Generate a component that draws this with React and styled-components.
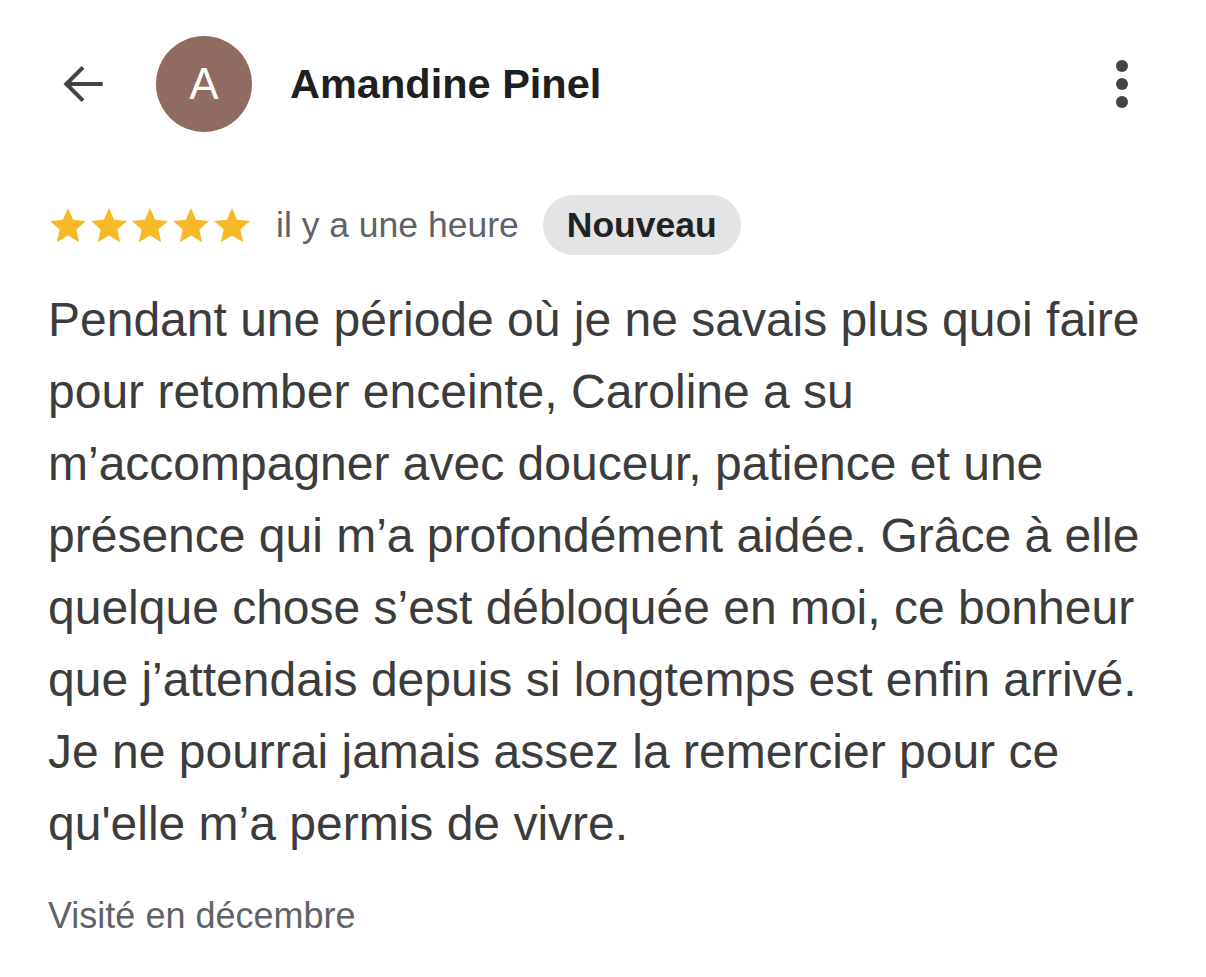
import React from "react";
import styled, { createGlobalStyle } from "styled-components";

const Global = createGlobalStyle`
  html, body { margin: 0; padding: 0; background: #fff; }
  body { font-family: "Liberation Sans", Arial, sans-serif; }
`;

const Page = styled.div`
  width: 1206px;
  min-height: 977px;
  background: #fff;
  box-sizing: border-box;
  padding: 36px 60px 0 48px;
`;

const Header = styled.div`
  display: flex;
  align-items: center;
  height: 96px;
`;

const BackButton = styled.button`
  border: 0;
  background: none;
  padding: 0;
  margin-left: 10px;
  width: 52px;
  height: 52px;
  display: flex;
  align-items: center;
  justify-content: center;
  color: #444;
`;

const Avatar = styled.div`
  width: 96px;
  height: 96px;
  border-radius: 50%;
  background: #8f6b61;
  color: #fff;
  display: flex;
  align-items: center;
  justify-content: center;
  font-size: 44px;
  margin-left: 46px;
`;

const Name = styled.div`
  font-weight: 700;
  font-size: 41.5px;
  color: #1f1f1f;
  margin-left: 38px;
  flex: 1;
`;

const MoreButton = styled.div`
  display: flex;
  flex-direction: column;
  gap: 6px;
  margin-right: 18px;
`;

const Dot = styled.span`
  width: 12px;
  height: 12px;
  border-radius: 50%;
  background: #444;
`;

const MetaRow = styled.div`
  display: flex;
  align-items: center;
  margin-top: 63px;
  height: 60px;
`;

const Stars = styled.div`
  display: flex;
  gap: 1px;
`;

const Time = styled.span`
  font-size: 35.5px;
  color: #5f6368;
  margin-left: 24px;
`;

const Badge = styled.span`
  margin-left: 24px;
  background: #e3e4e6;
  border-radius: 30px;
  height: 60px;
  padding: 0 24px;
  display: flex;
  align-items: center;
  font-size: 35.5px;
  font-weight: 700;
  color: #222;
`;

const Body = styled.p`
  margin: 29px 0 0;
  font-size: 48px;
  line-height: 72px;
  color: #3c3c3c;
`;

const Visit = styled.div`
  margin-top: 35px;
  font-size: 36px;
  color: #5f6368;
`;

const Star = () => (
  <svg width="40" height="40" viewBox="0 0 24 24">
    <path
      fill="#f7b928"
      d="M12 1.8l3.1 7.1 7.7.7-5.8 5.1 1.7 7.6L12 18.3l-6.7 4 1.7-7.6L1.2 9.6l7.7-.7z"
    />
  </svg>
);

export default function App() {
  return (
    <>
      <Global />
      <Page>
        <Header>
          <BackButton aria-label="Retour">
            <svg width="50" height="50" viewBox="0 0 24 24" fill="none" stroke="#444" strokeWidth="1.9">
              <path d="M21 12H3.5" />
              <path d="M11.5 4l-8 8 8 8" />
            </svg>
          </BackButton>
          <Avatar>A</Avatar>
          <Name>Amandine Pinel</Name>
          <MoreButton>
            <Dot />
            <Dot />
            <Dot />
          </MoreButton>
        </Header>
        <MetaRow>
          <Stars>
            {[0, 1, 2, 3, 4].map((i) => (
              <Star key={i} />
            ))}
          </Stars>
          <Time>il y a une heure</Time>
          <Badge>Nouveau</Badge>
        </MetaRow>
        <Body>
          Pendant une période où je ne savais plus quoi faire
          <br />
          pour retomber enceinte, Caroline a su
          <br />
          m’accompagner avec douceur, patience et une
          <br />
          présence qui m’a profondément aidée. Grâce à elle
          <br />
          quelque chose s’est débloquée en moi, ce bonheur
          <br />
          que j’attendais depuis si longtemps est enfin arrivé.
          <br />
          Je ne pourrai jamais assez la remercier pour ce
          <br />
          qu'elle m’a permis de vivre.
        </Body>
        <Visit>Visité en décembre</Visit>
      </Page>
    </>
  );
}
